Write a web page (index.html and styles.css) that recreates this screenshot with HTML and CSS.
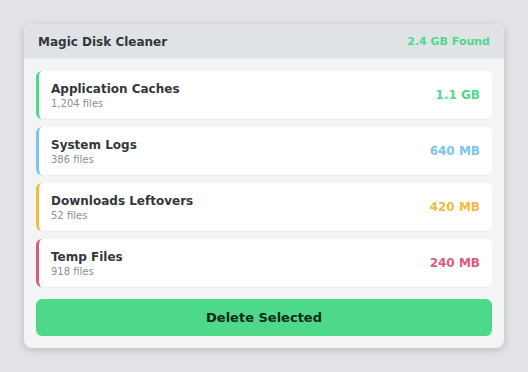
FILE: index.html
```html
<!DOCTYPE html>
<html lang="en">
<head>
  <meta charset="UTF-8" />
  <title>Magic Disk Cleaner</title>
  <link rel="stylesheet" href="styles.css">
</head>
<body>
  <div class="cleaner">
    <div class="cleaner-header">
      <span class="cleaner-title">Magic Disk Cleaner</span>
      <span class="cleaner-found">2.4 GB Found</span>
    </div>

    <div class="cleaner-body">
      <div class="item item-green">
        <div class="item-info">
          <div class="item-name">Application Caches</div>
          <div class="item-count">1,204 files</div>
        </div>
        <div class="item-size">1.1 GB</div>
      </div>

      <div class="item item-blue">
        <div class="item-info">
          <div class="item-name">System Logs</div>
          <div class="item-count">386 files</div>
        </div>
        <div class="item-size">640 MB</div>
      </div>

      <div class="item item-orange">
        <div class="item-info">
          <div class="item-name">Downloads Leftovers</div>
          <div class="item-count">52 files</div>
        </div>
        <div class="item-size">420 MB</div>
      </div>

      <div class="item item-red">
        <div class="item-info">
          <div class="item-name">Temp Files</div>
          <div class="item-count">918 files</div>
        </div>
        <div class="item-size">240 MB</div>
      </div>

      <button class="delete-button">Delete Selected</button>
    </div>
  </div>
</body>
</html>
```

FILE: styles.css
```css
body {
  margin: 0;
  padding: 24px;
  background: #e4e4e8;
  font-family: "DejaVu Sans", sans-serif;
  color: #33373d;
}

.cleaner {
  width: 480px;
  background: #f3f4f6;
  border-radius: 8px;
  overflow: hidden;
  box-shadow: 0 2px 8px rgba(0, 0, 0, 0.18);
}

.cleaner-header {
  display: flex;
  justify-content: space-between;
  align-items: center;
  height: 33px;
  padding: 1px 14px 0;
  background: #e0e3e6;
  border-bottom: 1px solid #e8eaed;
}

.cleaner-title {
  font-size: 12px;
  font-weight: bold;
  color: #33373d;
}

.cleaner-found {
  font-size: 11px;
  font-weight: bold;
  color: #4ed88a;
}

.cleaner-body {
  display: flex;
  flex-direction: column;
  gap: 8px;
  padding: 12px;
}

.item {
  display: flex;
  justify-content: space-between;
  align-items: center;
  height: 48px;
  padding: 0 12px;
  background: #fff;
  border-radius: 6px;
  border-left: 3px solid #4ed88a;
  box-sizing: border-box;
  box-shadow: 0 1px 1px rgba(0, 0, 0, 0.03);
}

.item-name {
  font-size: 12px;
  font-weight: bold;
  color: #33373d;
}

.item-count {
  font-size: 10px;
  color: #8b8f96;
  margin-top: 2px;
}

.item-size {
  font-size: 12px;
  font-weight: bold;
}

.item-green { border-left-color: #4ed88a; }
.item-green .item-size { color: #4ed88a; }

.item-blue { border-left-color: #7cc4f5; }
.item-blue .item-size { color: #7cc4f5; }

.item-orange { border-left-color: #f4b942; }
.item-orange .item-size { color: #f4b942; }

.item-red { border-left-color: #e0587a; }
.item-red .item-size { color: #e0587a; }

.delete-button {
  margin-top: 4px;
  height: 37px;
  border: none;
  border-radius: 6px;
  background: #4ed88a;
  color: #10291a;
  font-family: "DejaVu Sans", sans-serif;
  font-size: 13px;
  font-weight: bold;
  cursor: pointer;
}
```
